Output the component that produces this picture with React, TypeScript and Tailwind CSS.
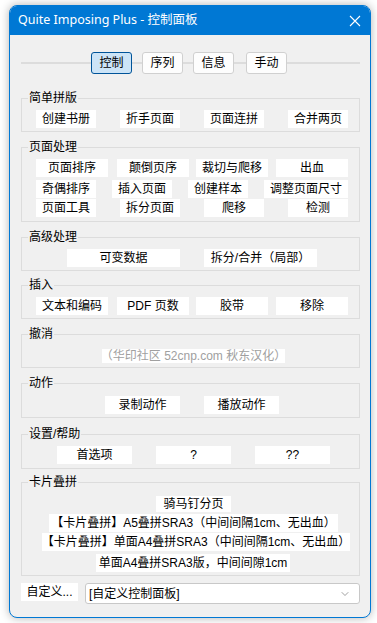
import { ChevronDown } from "lucide-react";
import type { ReactNode } from "react";

const font = "font-['Liberation_Sans','Noto_Sans_CJK_SC',sans-serif]";

function Btn({ className = "", children }: { className?: string; children: ReactNode }) {
  return (
    <div
      className={`flex h-[18px] shrink-0 items-center justify-center whitespace-nowrap bg-white text-[12px] leading-none text-black ${className}`}
    >
      {children}
    </div>
  );
}

function Group({
  title,
  className = "",
  children,
}: {
  title: string;
  className?: string;
  children: ReactNode;
}) {
  return (
    <div className={`relative ml-[11px] w-[339px] border border-[#dcdcdc] ${className}`}>
      <span className="absolute -top-[8px] left-[6px] bg-[#f0f0f0] px-[1px] text-[12px] leading-[14px] text-black">
        {title}
      </span>
      {children}
    </div>
  );
}

function Tab({ label, active = false }: { label: string; active?: boolean }) {
  return (
    <div
      className={`flex h-[22px] w-[41px] shrink-0 items-center justify-center rounded-[3px] border text-[12px] leading-none text-black ${
        active ? "border-[#005499] bg-[#cce4f7]" : "border-[#d0d0d0] bg-[#fdfdfd]"
      }`}
    >
      {label}
    </div>
  );
}

function Line({ w }: { w: string }) {
  return <div className={`h-[2px] bg-[#dcdcdc] ${w}`} />;
}

export default function App() {
  return (
    <div className={`h-[623px] w-[377px] overflow-hidden bg-white pt-[5px] ${font}`}>
      <div className="ml-[9px] flex h-[613px] w-[362px] flex-col overflow-hidden rounded-[8px] border border-[#0078d4] bg-[#f0f0f0] shadow-[0_0_10px_rgba(0,0,0,0.3)]">
        {/* title bar */}
        <div className="flex h-[29px] shrink-0 items-center justify-between bg-[#0078d4] pl-[8px] pr-[9px] text-white">
          <span className="font-['Noto_Sans','Noto_Sans_CJK_SC',sans-serif] text-[12.5px] leading-none">
            Quite Imposing Plus - 控制面板
          </span>
          <svg width="12" height="12" viewBox="0 0 12 12" className="mt-[1px]">
            <path d="M1 1L11 11M11 1L1 11" stroke="white" strokeWidth="1.1" />
          </svg>
        </div>

        {/* tabs */}
        <div className="ml-[11px] mt-[17px] flex w-[339px] items-center">
          <Line w="w-[70px]" />
          <Tab label="控制" active />
          <Line w="w-[10px]" />
          <Tab label="序列" />
          <Line w="w-[10px]" />
          <Tab label="信息" />
          <Line w="w-[12px]" />
          <Tab label="手动" />
          <Line w="flex-1" />
        </div>

        <Group title="简单拼版" className="mt-[24px] pb-[3px] pt-[11px]">
          <div className="flex gap-[24px] pl-[14px]">
            <Btn className="w-[60px]">创建书册</Btn>
            <Btn className="w-[60px]">折手页面</Btn>
            <Btn className="w-[60px]">页面连拼</Btn>
            <Btn className="w-[60px]">合并两页</Btn>
          </div>
        </Group>

        <Group title="页面处理" className="mt-[15px] pb-[4px] pt-[11px]">
          <div className="flex pl-[14px]">
            <Btn className="w-[72px]">页面排序</Btn>
            <Btn className="ml-[9px] w-[72px]">颠倒页序</Btn>
            <Btn className="ml-[7px] w-[72px]">裁切与爬移</Btn>
            <Btn className="ml-[8px] w-[72px]">出血</Btn>
          </div>
          <div className="mt-[3px] flex gap-[16px] pl-[14px]">
            <Btn className="w-[60px]">奇偶排序</Btn>
            <Btn className="w-[60px]">插入页面</Btn>
            <Btn className="w-[60px]">创建样本</Btn>
            <Btn className="w-[84px]">调整页面尺寸</Btn>
          </div>
          <div className="mt-[1px] flex gap-[24px] pl-[14px]">
            <Btn className="w-[60px]">页面工具</Btn>
            <Btn className="w-[60px]">拆分页面</Btn>
            <Btn className="w-[60px]">爬移</Btn>
            <Btn className="w-[60px]">检测</Btn>
          </div>
        </Group>

        <Group title="高级处理" className="mt-[15px] pb-[3px] pt-[11px]">
          <div className="flex gap-[24px] pl-[45px]">
            <Btn className="w-[113px]">可变数据</Btn>
            <Btn className="w-[113px]">拆分/合并（局部）</Btn>
          </div>
        </Group>

        <Group title="插入" className="mt-[14px] pb-[3px] pt-[11px]">
          <div className="flex pl-[14px]">
            <Btn className="w-[72px]">文本和编码</Btn>
            <Btn className="ml-[9px] w-[72px]">PDF 页数</Btn>
            <Btn className="ml-[7px] w-[72px]">胶带</Btn>
            <Btn className="ml-[8px] w-[72px]">移除</Btn>
          </div>
        </Group>

        <Group title="撤消" className="mt-[15px] pb-[4px] pt-[14px]">
          <div className="flex pl-[80px]">
            <Btn className="!h-[14px] w-[183px] !text-[#a0a0a0]">（华印社区 52cnp.com 秋东汉化）</Btn>
          </div>
        </Group>

        <Group title="动作" className="mt-[15px] pb-[3px] pt-[12px]">
          <div className="flex gap-[24px] pl-[83px]">
            <Btn className="w-[75px]">录制动作</Btn>
            <Btn className="w-[75px]">播放动作</Btn>
          </div>
        </Group>

        <Group title="设置/帮助" className="mt-[16px] pb-[4px] pt-[11px]">
          <div className="flex gap-[24px] pl-[35px]">
            <Btn className="w-[75px]">首选项</Btn>
            <Btn className="w-[75px]">?</Btn>
            <Btn className="w-[75px]">??</Btn>
          </div>
        </Group>

        <Group title="卡片叠拼" className="mt-[13px] pb-[3px] pt-[13px]">
          <div className="flex flex-col items-start">
            <Btn className="!h-[16px] ml-[134px] w-[75px]">骑马钉分页</Btn>
            <Btn className="ml-[27px] mt-[2px] w-[289px]">【卡片叠拼】A5叠拼SRA3（中间间隔1cm、无出血）</Btn>
            <Btn className="ml-[20px] mt-[1px] w-[308px]">【卡片叠拼】单面A4叠拼SRA3（中间间隔1cm、无出血）</Btn>
            <Btn className="ml-[74px] mt-[3px] w-[194px]">单面A4叠拼SRA3版，中间间隙1cm</Btn>
          </div>
        </Group>

        <div className="ml-[11px] mt-[7px] flex w-[339px] items-start">
          <Btn className="w-[57px]">自定义...</Btn>
          <div className="ml-[7px] flex h-[21px] flex-1 items-center justify-between rounded-[3px] border border-[#c8c8c8] bg-white pl-[3px] pr-[8px] text-[12px] leading-none text-black">
            <span>[自定义控制面板]</span>
            <ChevronDown size={12} strokeWidth={1.2} className="text-[#606060]" />
          </div>
        </div>
      </div>
    </div>
  );
}
